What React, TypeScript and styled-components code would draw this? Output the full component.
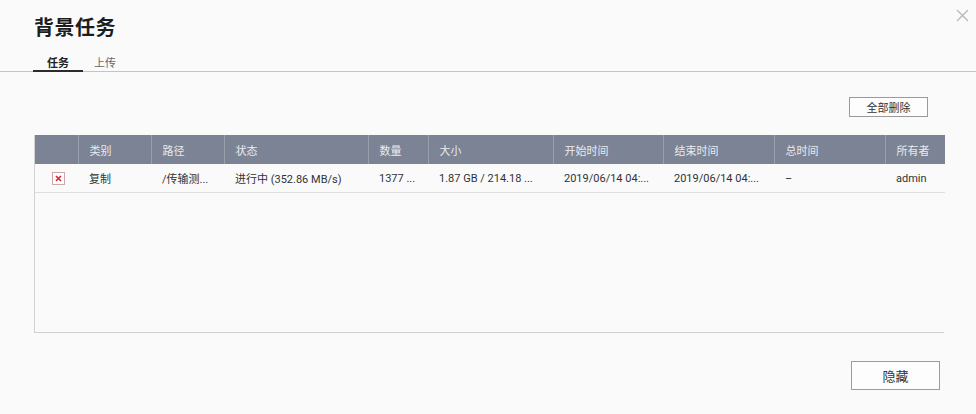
import * as React from "react";
import styled, { createGlobalStyle } from "styled-components";

const GlobalStyle = createGlobalStyle`
  html, body {
    margin: 0;
    padding: 0;
    background: #fafafa;
  }
  body {
    font-family: "Noto Sans CJK SC", "Noto Sans", Roboto, sans-serif;
    color: #333;
  }
`;

const Dialog = styled.div`
  position: relative;
  width: 976px;
  height: 414px;
  background: #fafafa;
  display: flex;
  flex-direction: column;
`;

const CloseButton = styled.button`
  position: absolute;
  top: 9px;
  right: 7px;
  width: 13px;
  height: 13px;
  padding: 0;
  border: none;
  background: transparent;
  cursor: pointer;
  svg {
    display: block;
  }
`;

const Title = styled.h1`
  margin: 12px 0 0 34px;
  font-size: 20px;
  line-height: 30px;
  font-weight: 700;
  color: #1d1d1d;
  letter-spacing: 0.5px;
`;

const TabBar = styled.div`
  display: flex;
  margin-top: 14px;
  padding-left: 33px;
  border-bottom: 1px solid #c4c4c4;
`;

const Tab = styled.div<{ $active?: boolean }>`
  box-sizing: border-box;
  width: ${(p) => (p.$active ? "50px" : "44px")};
  height: 16px;
  margin-bottom: -1px;
  text-align: center;
  font-size: 11px;
  line-height: 12px;
  font-weight: ${(p) => (p.$active ? 700 : 400)};
  color: ${(p) => (p.$active ? "#222" : "#666")};
  border-bottom: 2px solid ${(p) => (p.$active ? "#2b2b2b" : "transparent")};
`;

const Toolbar = styled.div`
  display: flex;
  justify-content: flex-end;
  padding: 25px 48px 0 0;
`;

const SmallButton = styled.button`
  box-sizing: border-box;
  width: 79px;
  height: 20px;
  padding: 0;
  border: 1px solid #9a9a9a;
  background: #fdfdfd;
  font-family: inherit;
  font-size: 11px;
  color: #333;
  cursor: pointer;
`;

const TableBox = styled.div`
  box-sizing: border-box;
  margin: 18px 0 0 34px;
  width: 910px;
  height: 198px;
  border-left: 1px solid #d2d2d2;
  border-bottom: 1px solid #cfcfcf;
`;

const Table = styled.table`
  width: 909px;
  border-collapse: collapse;
  table-layout: fixed;
  font-size: 11px;
`;

const HeadCell = styled.th`
  height: 29px;
  padding: 0 0 0 11px;
  background: #7b8394;
  color: #e9ebef;
  font-weight: 400;
  text-align: left;
  white-space: nowrap;
  overflow: hidden;
  border-left: 1px solid #98a0ad;
  &:first-child {
    border-left: none;
  }
`;

const Cell = styled.td`
  height: 28px;
  padding: 0 0 0 11px;
  color: #333;
  white-space: nowrap;
  overflow: hidden;
  border-bottom: 1px solid #dedede;
  font-family: Roboto, "Noto Sans CJK SC", sans-serif;
`;

const CheckCell = styled(Cell)`
  padding: 0 0 0 17px;
  svg {
    display: block;
  }
`;

const Footer = styled.div`
  display: flex;
  justify-content: flex-end;
  padding: 28px 36px 0 0;
`;

const HideButton = styled.button`
  box-sizing: border-box;
  width: 89px;
  height: 29px;
  padding: 0;
  border: 1px solid #9c9c9c;
  background: #fdfdfd;
  font-family: inherit;
  font-size: 13px;
  color: #333;
  cursor: pointer;
`;

const columns = [
  { label: "", width: 43 },
  { label: "类别", width: 73 },
  { label: "路径", width: 73 },
  { label: "状态", width: 144 },
  { label: "数量", width: 60 },
  { label: "大小", width: 125 },
  { label: "开始时间", width: 110 },
  { label: "结束时间", width: 111 },
  { label: "总时间", width: 111 },
  { label: "所有者", width: 60 },
];

const rows = [
  {
    type: "复制",
    path: "/传输测...",
    status: "进行中 (352.86 MB/s)",
    count: "1377 ...",
    size: "1.87 GB / 214.18 ...",
    start: "2019/06/14 04:...",
    end: "2019/06/14 04:...",
    total: "–",
    owner: "admin",
  },
];

const CancelBox = () => (
  <svg width="13" height="13" viewBox="0 0 13 13">
    <rect x="0.5" y="0.5" width="12" height="12" fill="#fff" stroke="#c9a9ad" />
    <path d="M4 4 L9 9 M9 4 L4 9" stroke="#e0202a" strokeWidth="1.6" />
  </svg>
);

const App = () => {
  return (
    <Dialog>
      <GlobalStyle />
      <CloseButton aria-label="close">
        <svg width="13" height="13" viewBox="0 0 13 13">
          <path d="M1 1 L12 12 M12 1 L1 12" stroke="#b5b5b5" strokeWidth="1.2" />
        </svg>
      </CloseButton>
      <Title>背景任务</Title>
      <TabBar>
        <Tab $active>任务</Tab>
        <Tab>上传</Tab>
      </TabBar>
      <Toolbar>
        <SmallButton>全部删除</SmallButton>
      </Toolbar>
      <TableBox>
        <Table>
          <colgroup>
            {columns.map((c, i) => (
              <col key={i} style={{ width: c.width }} />
            ))}
          </colgroup>
          <thead>
            <tr>
              {columns.map((c, i) => (
                <HeadCell key={i}>{c.label}</HeadCell>
              ))}
            </tr>
          </thead>
          <tbody>
            {rows.map((r, i) => (
              <tr key={i}>
                <CheckCell>
                  <CancelBox />
                </CheckCell>
                <Cell>{r.type}</Cell>
                <Cell>{r.path}</Cell>
                <Cell>{r.status}</Cell>
                <Cell>{r.count}</Cell>
                <Cell>{r.size}</Cell>
                <Cell>{r.start}</Cell>
                <Cell>{r.end}</Cell>
                <Cell>{r.total}</Cell>
                <Cell>{r.owner}</Cell>
              </tr>
            ))}
          </tbody>
        </Table>
      </TableBox>
      <Footer>
        <HideButton>隐藏</HideButton>
      </Footer>
    </Dialog>
  );
};

export default App;
